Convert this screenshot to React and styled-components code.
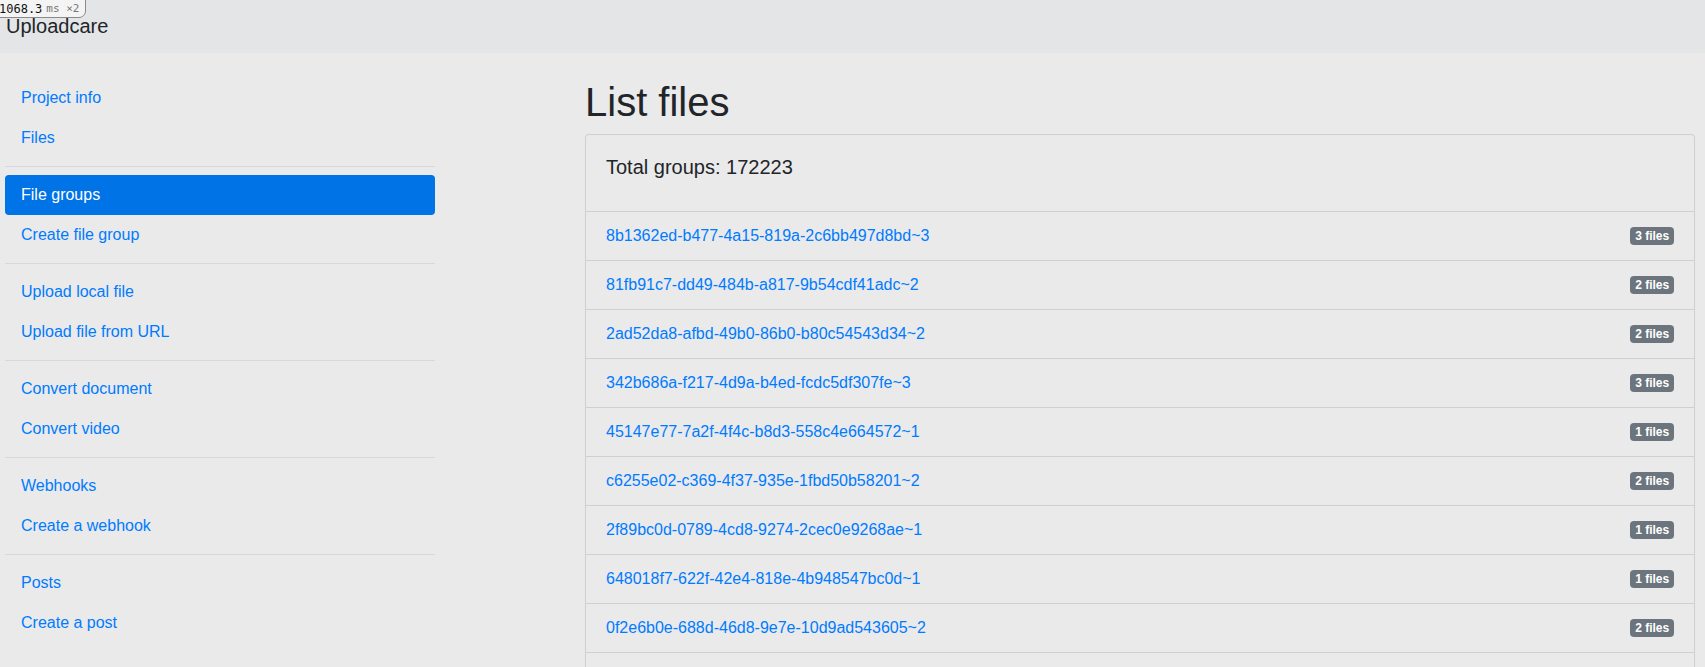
import React from 'react';
import styled, { createGlobalStyle } from 'styled-components';

const GlobalStyle = createGlobalStyle`
  html, body {
    margin: 0;
    padding: 0;
    background: #eaeaea;
    font-family: "Liberation Sans", Arial, sans-serif;
    font-size: 16px;
    line-height: 1.5;
    color: #212529;
  }
  * { box-sizing: border-box; }
`;

// Timing badge in the top-left corner, over the navbar
const TimingBadge = styled.div`
  position: absolute;
  top: -1px;
  left: -2px;
  height: 19px;
  padding: 0 6px 0 0;
  display: flex;
  align-items: center;
  gap: 4px;
  background: #f4f4f4;
  border: 1px solid #8a8a8a;
  border-bottom-right-radius: 7px;
  font-family: "DejaVu Sans Mono", "Liberation Mono", monospace;
  font-size: 12px;
  line-height: 1;
  color: #111;
  z-index: 10;

  span {
    color: #777;
    font-size: 11px;
  }
`;

const Navbar = styled.header`
  position: relative;
  height: 53px;
  padding: 11px 6px 0;
  background: #e4e5e7;
`;

const Brand = styled.a`
  font-size: 20px;
  line-height: 30px;
  color: #212529;
  text-decoration: none;
`;

const Layout = styled.div`
  display: grid;
  grid-template-columns: 430px 1fr;
  column-gap: 150px;
  padding: 25px 10px 0 5px;
`;

const Sidebar = styled.nav`
  display: flex;
  flex-direction: column;
`;

const NavItem = styled.a`
  display: block;
  padding: 8px 16px;
  line-height: 24px;
  border-radius: 4px;
  text-decoration: none;
  color: ${({ $active }) => ($active ? '#fff' : '#007bff')};
  background: ${({ $active }) => ($active ? '#0073e6' : 'transparent')};
`;

const Divider = styled.hr`
  margin: 8px 0;
  border: 0;
  border-top: 1px solid #d6d8db;
  height: 0;
`;

const Main = styled.main`
  min-width: 0;
`;

const Title = styled.h1`
  margin: 0 0 8px;
  font-size: 40px;
  font-weight: 400;
  line-height: 1.2;
`;

const Card = styled.section`
  border: 1px solid #d0d0d0;
  border-radius: 4px 4px 0 0;
  border-bottom: 0;
`;

const CardHeader = styled.div`
  padding: 20px 20px 20px;
  border-bottom: 1px solid #d0d0d0;
`;

const CardTitle = styled.h5`
  margin: 0 0 12px;
  font-size: 20px;
  font-weight: 400;
  line-height: 1.2;
`;

const Row = styled.div`
  display: flex;
  justify-content: space-between;
  align-items: center;
  padding: 12px 20px;
  line-height: 24px;
  border-bottom: 1px solid #d0d0d0;
`;

const GroupLink = styled.a`
  color: #007bff;
  text-decoration: none;
`;

const Badge = styled.span`
  display: inline-block;
  padding: 3px 4.8px;
  font-size: 12px;
  font-weight: 700;
  line-height: 1;
  color: #fff;
  background: #6c757d;
  border-radius: 4px;
`;

const navGroups = [
  ['Project info', 'Files'],
  ['File groups', 'Create file group'],
  ['Upload local file', 'Upload file from URL'],
  ['Convert document', 'Convert video'],
  ['Webhooks', 'Create a webhook'],
  ['Posts', 'Create a post'],
];

const groups = [
  ['8b1362ed-b477-4a15-819a-2c6bb497d8bd~3', 3],
  ['81fb91c7-dd49-484b-a817-9b54cdf41adc~2', 2],
  ['2ad52da8-afbd-49b0-86b0-b80c54543d34~2', 2],
  ['342b686a-f217-4d9a-b4ed-fcdc5df307fe~3', 3],
  ['45147e77-7a2f-4f4c-b8d3-558c4e664572~1', 1],
  ['c6255e02-c369-4f37-935e-1fbd50b58201~2', 2],
  ['2f89bc0d-0789-4cd8-9274-2cec0e9268ae~1', 1],
  ['648018f7-622f-42e4-818e-4b948547bc0d~1', 1],
  ['0f2e6b0e-688d-46d8-9e7e-10d9ad543605~2', 2],
  ['5a0c3e41-1b7d-4e2f-9c61-7d2b4f8e0a13~1', 1],
];

export default function App() {
  return (
    <>
      <GlobalStyle />
      <Navbar>
        <TimingBadge>
          1068.3<span>ms ×2</span>
        </TimingBadge>
        <Brand href="#">Uploadcare</Brand>
      </Navbar>
      <Layout>
        <Sidebar>
          {navGroups.map((group, i) => (
            <React.Fragment key={group[0]}>
              {i > 0 && <Divider />}
              {group.map((label) => (
                <NavItem key={label} href="#" $active={label === 'File groups'}>
                  {label}
                </NavItem>
              ))}
            </React.Fragment>
          ))}
        </Sidebar>
        <Main>
          <Title>List files</Title>
          <Card>
            <CardHeader>
              <CardTitle>Total groups: 172223</CardTitle>
            </CardHeader>
            {groups.map(([id, count]) => (
              <Row key={id}>
                <GroupLink href="#">{id}</GroupLink>
                <Badge>{count} files</Badge>
              </Row>
            ))}
          </Card>
        </Main>
      </Layout>
    </>
  );
}
